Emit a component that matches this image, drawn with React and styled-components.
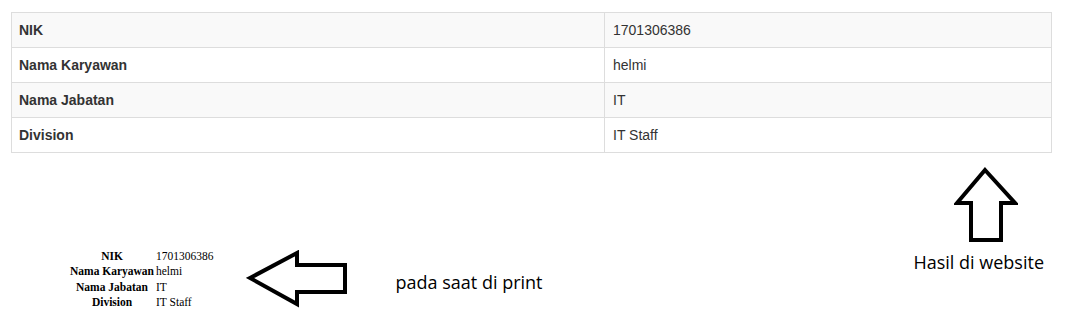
import React from 'react';
import styled, {createGlobalStyle} from 'styled-components';

const employee = [
  {label: 'NIK', value: '1701306386'},
  {label: 'Nama Karyawan', value: 'helmi'},
  {label: 'Nama Jabatan', value: 'IT'},
  {label: 'Division', value: 'IT Staff'},
];

const UpArrow = () => (
  <svg width="64" height="76" viewBox="0 0 64 76">
    <polygon
      points="31,3 61,36 47,36 47,73 17,73 17,36 3,36"
      fill="none"
      stroke="#000"
      strokeWidth="4"
      strokeLinejoin="miter"
    />
  </svg>
);

const LeftArrow = () => (
  <svg width="104" height="58" viewBox="0 0 104 58">
    <polygon
      points="4,28 51,3 51,15 99,15 99,42 51,42 51,54"
      fill="none"
      stroke="#000"
      strokeWidth="4"
      strokeLinejoin="miter"
    />
  </svg>
);

const App = () => {
  return (
    <>
      <GlobalStyle />
      <StPage>
        <StWebTable>
          <tbody>
            {employee.map((row, index) => (
              <StWebRow key={row.label} $striped={index % 2 === 0}>
                <StWebLabel>{row.label}</StWebLabel>
                <StWebValue>{row.value}</StWebValue>
              </StWebRow>
            ))}
          </tbody>
        </StWebTable>

        <StNotes>
          <StPrintGroup>
            <StPrintTable>
              <tbody>
                {employee.map(row => (
                  <tr key={row.label}>
                    <StPrintLabel>{row.label}</StPrintLabel>
                    <StPrintValue>{row.value}</StPrintValue>
                  </tr>
                ))}
              </tbody>
            </StPrintTable>
            <StLeftArrow>
              <LeftArrow />
            </StLeftArrow>
            <StCaption $shift={6}>pada saat di print</StCaption>
          </StPrintGroup>

          <StWebGroup>
            <StUpArrow>
              <UpArrow />
            </StUpArrow>
            <StCaption>Hasil di website</StCaption>
          </StWebGroup>
        </StNotes>
      </StPage>
    </>
  );
};

export default App;

const GlobalStyle = createGlobalStyle`
  body {
    margin: 0;
    background: #fff;
  }
`;

const StPage = styled.div`
  width: 1076px;
  height: 333px;
  padding: 12px 0 0 11px;
  box-sizing: border-box;
  overflow: hidden;
`;

const StWebTable = styled.table`
  width: 1041px;
  border-collapse: collapse;
  border: 1px solid #ddd;
  font-family: 'Liberation Sans', Arial, sans-serif;
  font-size: 14px;
  color: #333;
`;

const StWebRow = styled.tr`
  height: 35px;
  background: ${({$striped}) => ($striped ? '#f9f9f9' : '#fff')};
`;

const StWebLabel = styled.td`
  width: 578px;
  padding: 0 7px;
  border: 1px solid #ddd;
  font-weight: bold;
  vertical-align: middle;
`;

const StWebValue = styled.td`
  padding: 0 8px;
  border: 1px solid #ddd;
  vertical-align: middle;
`;

const StNotes = styled.div`
  display: flex;
  justify-content: space-between;
  align-items: flex-start;
  margin-top: 14px;
  padding-right: 32px;
`;

const StPrintGroup = styled.div`
  display: flex;
  align-items: center;
  margin-top: 81px;
  padding-left: 58px;
`;

const StPrintTable = styled.table`
  border-collapse: collapse;
  font-family: 'Liberation Serif', 'Times New Roman', serif;
  font-size: 11.5px;
  color: #000;

  & td {
    padding: 0 1px;
    height: 15.5px;
    line-height: 14px;
  }
`;

const StPrintLabel = styled.td`
  font-weight: bold;
  text-align: center;
`;

const StPrintValue = styled.td`
  text-align: left;
`;

const StLeftArrow = styled.div`
  display: flex;
  margin-left: 31px;
  margin-right: 46px;
`;

const StWebGroup = styled.div`
  display: flex;
  flex-direction: column;
  align-items: center;
`;

const StUpArrow = styled.div`
  display: flex;
  margin-left: 15px;
  margin-bottom: 7px;
`;

const StCaption = styled.div`
  font-family: 'Open Sans', 'Noto Sans', sans-serif;
  font-size: 18px;
  color: #000;
  margin-top: ${({$shift}) => ($shift || 0)}px;
`;
